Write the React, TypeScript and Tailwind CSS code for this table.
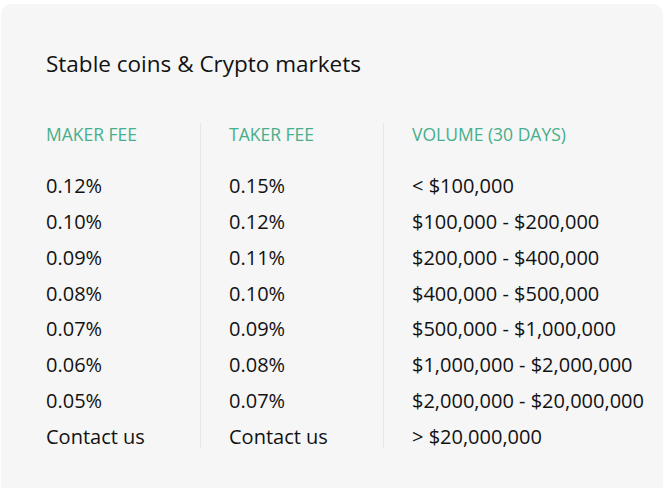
import React from "react";

const makers = ["0.12%", "0.10%", "0.09%", "0.08%", "0.07%", "0.06%", "0.05%", "Contact us"];
const takers = ["0.15%", "0.12%", "0.11%", "0.10%", "0.09%", "0.08%", "0.07%", "Contact us"];
const volumes = [
  "< $100,000",
  "$100,000 - $200,000",
  "$200,000 - $400,000",
  "$400,000 - $500,000",
  "$500,000 - $1,000,000",
  "$1,000,000 - $2,000,000",
  "$2,000,000 - $20,000,000",
  "> $20,000,000",
];

function Column({ title, items, className }: { title: string; items: string[]; className: string }) {
  return (
    <div className={className}>
      <div className="text-[17.5px] leading-[22px] text-[#47af8b]">{title}</div>
      <div className="mt-[30px] flex flex-col gap-[13.85px]">
        {items.map((t) => (
          <div key={t} className="text-[20px] leading-[22px] text-[#121212] whitespace-nowrap">
            {t}
          </div>
        ))}
      </div>
    </div>
  );
}

export default function App() {
  return (
    <div className="w-[667px] h-[488px] bg-white pt-[4px] pl-[1px] overflow-hidden" style={{ fontFamily: '"Open Sans", sans-serif' }}>
      <div className="w-[662px] h-[494px] bg-[#f6f6f6] rounded-[10px] pl-[45px] pt-[46px]">
        <h2 className="text-[22.5px] leading-[28px] text-[#121212]">Stable coins &amp; Crypto markets</h2>
        <div className="mt-[45px] flex">
          <Column title="MAKER FEE" items={makers} className="w-[154px]" />
          <Column title="TAKER FEE" items={takers} className="w-[183px] border-l border-[#e6e6e6] pl-[28px]" />
          <Column title="VOLUME (30 DAYS)" items={volumes} className="border-l border-[#e6e6e6] pl-[28px]" />
        </div>
      </div>
    </div>
  );
}
